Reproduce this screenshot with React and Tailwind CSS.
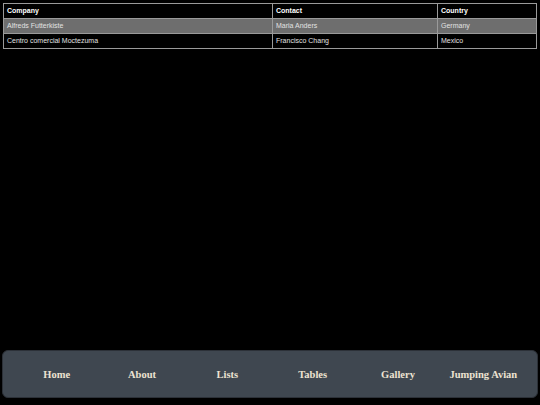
const rows = [
  { company: 'Alfreds Futterkiste', contact: 'Maria Anders', country: 'Germany' },
  { company: 'Centro comercial Moctezuma', contact: 'Francisco Chang', country: 'Mexico' },
]

const links = ['Home', 'About', 'Lists', 'Tables', 'Gallery', 'Jumping Avian']

export default function App() {
  return (
    <div className="flex min-h-screen flex-col justify-between bg-black pt-[3px] pb-[7px] px-[2px] antialiased">
      <div className="px-px">
        <table className="w-full border-collapse border border-[#9a9a9a] text-[7px] text-[#e2e2e2] font-['Liberation_Sans',Arial,sans-serif]">
          <thead>
            <tr>
              <th className="w-[269px] border border-[#9a9a9a] px-[3px] h-[15px] text-left font-bold text-white">Company</th>
              <th className="w-[165px] border border-[#9a9a9a] px-[3px] h-[15px] text-left font-bold text-white">Contact</th>
              <th className="border border-[#9a9a9a] px-[3px] h-[15px] text-left font-bold text-white">Country</th>
            </tr>
          </thead>
          <tbody>
            {rows.map((r, i) => (
              <tr key={r.company} className={i === 0 ? 'bg-[#6e6e6e]' : ''}>
                <td className="border border-[#9a9a9a] px-[3px] h-[15px]">{r.company}</td>
                <td className="border border-[#9a9a9a] px-[3px] h-[15px]">{r.contact}</td>
                <td className="border border-[#9a9a9a] px-[3px] h-[15px]">{r.country}</td>
              </tr>
            ))}
          </tbody>
        </table>
      </div>
      <nav className="flex h-[48px] items-center rounded-[6px] border border-[#2c3138] bg-[#3f4750] px-[11px] pt-px">
        {links.map((l) => (
          <a
            key={l}
            href="#"
            className="flex-1 text-center font-['Liberation_Serif','Times_New_Roman',serif] text-[10.5px] font-bold text-[#ede3d2]"
          >
            {l}
          </a>
        ))}
      </nav>
    </div>
  )
}
